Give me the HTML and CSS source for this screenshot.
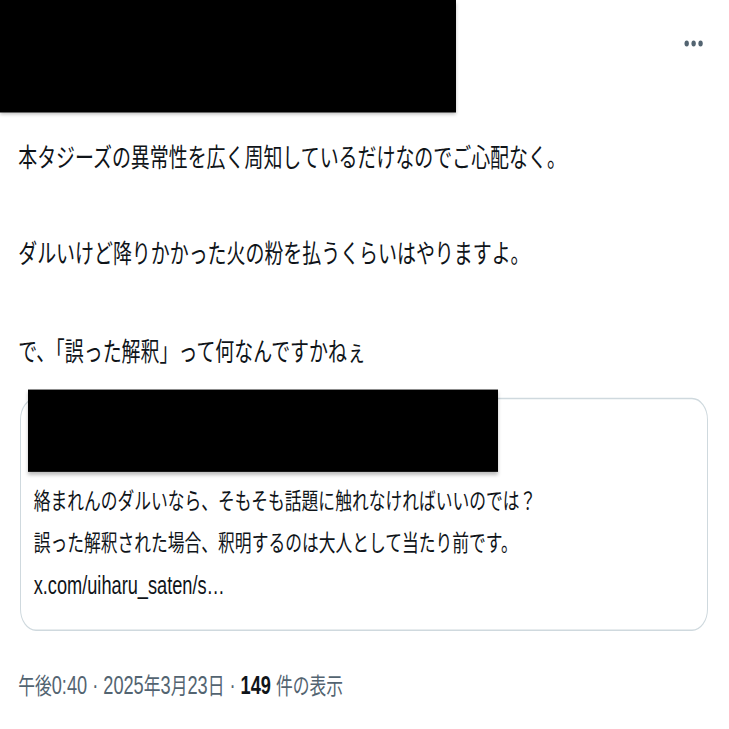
FILE: index.html
```html
<!DOCTYPE html>
<html lang="ja">
  <head>
    <meta charset="utf-8">
    <meta name="viewport" content="width=device-width, initial-scale=1.0">
    <title>ポスト</title>
    <link rel="stylesheet" href="styles.css">
  </head>

  <body>
    <article class="tweet">
      <header class="tweet-head">
        <div class="redact redact-user"></div>
        <button class="more" aria-label="もっと見る">
          <svg viewBox="0 0 30 10" width="22" height="7.3">
            <circle cx="5" cy="5" r="3"/>
            <circle cx="14.5" cy="5" r="3"/>
            <circle cx="24" cy="5" r="3"/>
          </svg>
        </button>
      </header>

      <div class="tweet-text">
        本タジーズの異常性を広く周知しているだけなのでご心配なく。<br><br>
        ダルいけど降りかかった火の粉を払うくらいはやりますよ。<br><br>
        で、「誤った解釈」って何なんですかねぇ
      </div>

      <div class="quote">
        <div class="redact redact-quote"></div>
        <div class="quote-text">
          絡まれんのダルいなら、そもそも話題に触れなければいいのでは？<br>
          誤った解釈された場合、釈明するのは大人として当たり前です。<br>
          <span class="lat">x.com/uiharu_saten/s…</span>
        </div>
      </div>

      <div class="meta">
        午後<span class="lat">0:40 · 2025</span>年<span class="lat">3</span>月<span class="lat">23</span>日<span class="lat"> · <strong>149</strong> </span>件の表示
      </div>
    </article>
  </body>
</html>
```

FILE: styles.css
```css
* {
  margin:0;
  padding:0;
  box-sizing:border-box;
}

html, body {
  background:#fff;
}

body {
  min-height:729px;
  font-family:"Liberation Sans", "Noto Sans CJK JP", sans-serif;
  color:#0f1419;
}

/* the capture is stretched upward, so the post is laid out at its width and pulled tall */
.tweet {
  width:729px;
  transform:scaleY(1.3717);
  transform-origin:0 0;
}

.tweet-head {
  display:flex;
  justify-content:space-between;
  align-items:flex-start;
}

.redact {
  background:#000;
}

.redact-user {
  width:456px;
  height:82.4px;
  box-shadow:0 2px 3px rgba(0,0,0,0.25);
}

.more {
  background:none;
  border:0;
  margin:28.4px 24px 0 0;
  line-height:0;
}

.more svg {
  fill:#536471;
}

.tweet-text {
  font-size:18.95px;
  line-height:35.36px;
  padding:0 18.2px;
  margin-top:15.3px;
}

.quote {
  position:relative;
  margin:16px 21px 0 19.7px;
  border:1px solid #cfd9de;
  border-radius:16px;
  padding:58.3px 13px 15.3px;
}

/* redaction laid over the quoted author's row */
.redact-quote {
  position:absolute;
  top:-7.3px;
  left:7.3px;
  width:470px;
  height:59.8px;
  box-shadow:0 2px 3px rgba(0,0,0,0.25);
}

.quote-text {
  font-size:16.77px;
  line-height:31.35px;
}

/* latin runs sit a little larger than the kana around them */
.lat {
  font-size:18.2px;
  line-height:1;
}

.meta {
  margin-top:29.9px;
  padding:0 18.2px;
  font-size:16.77px;
  line-height:21.9px;
  color:#536471;
}

.meta strong {
  color:#0f1419;
  font-weight:700;
}
```
